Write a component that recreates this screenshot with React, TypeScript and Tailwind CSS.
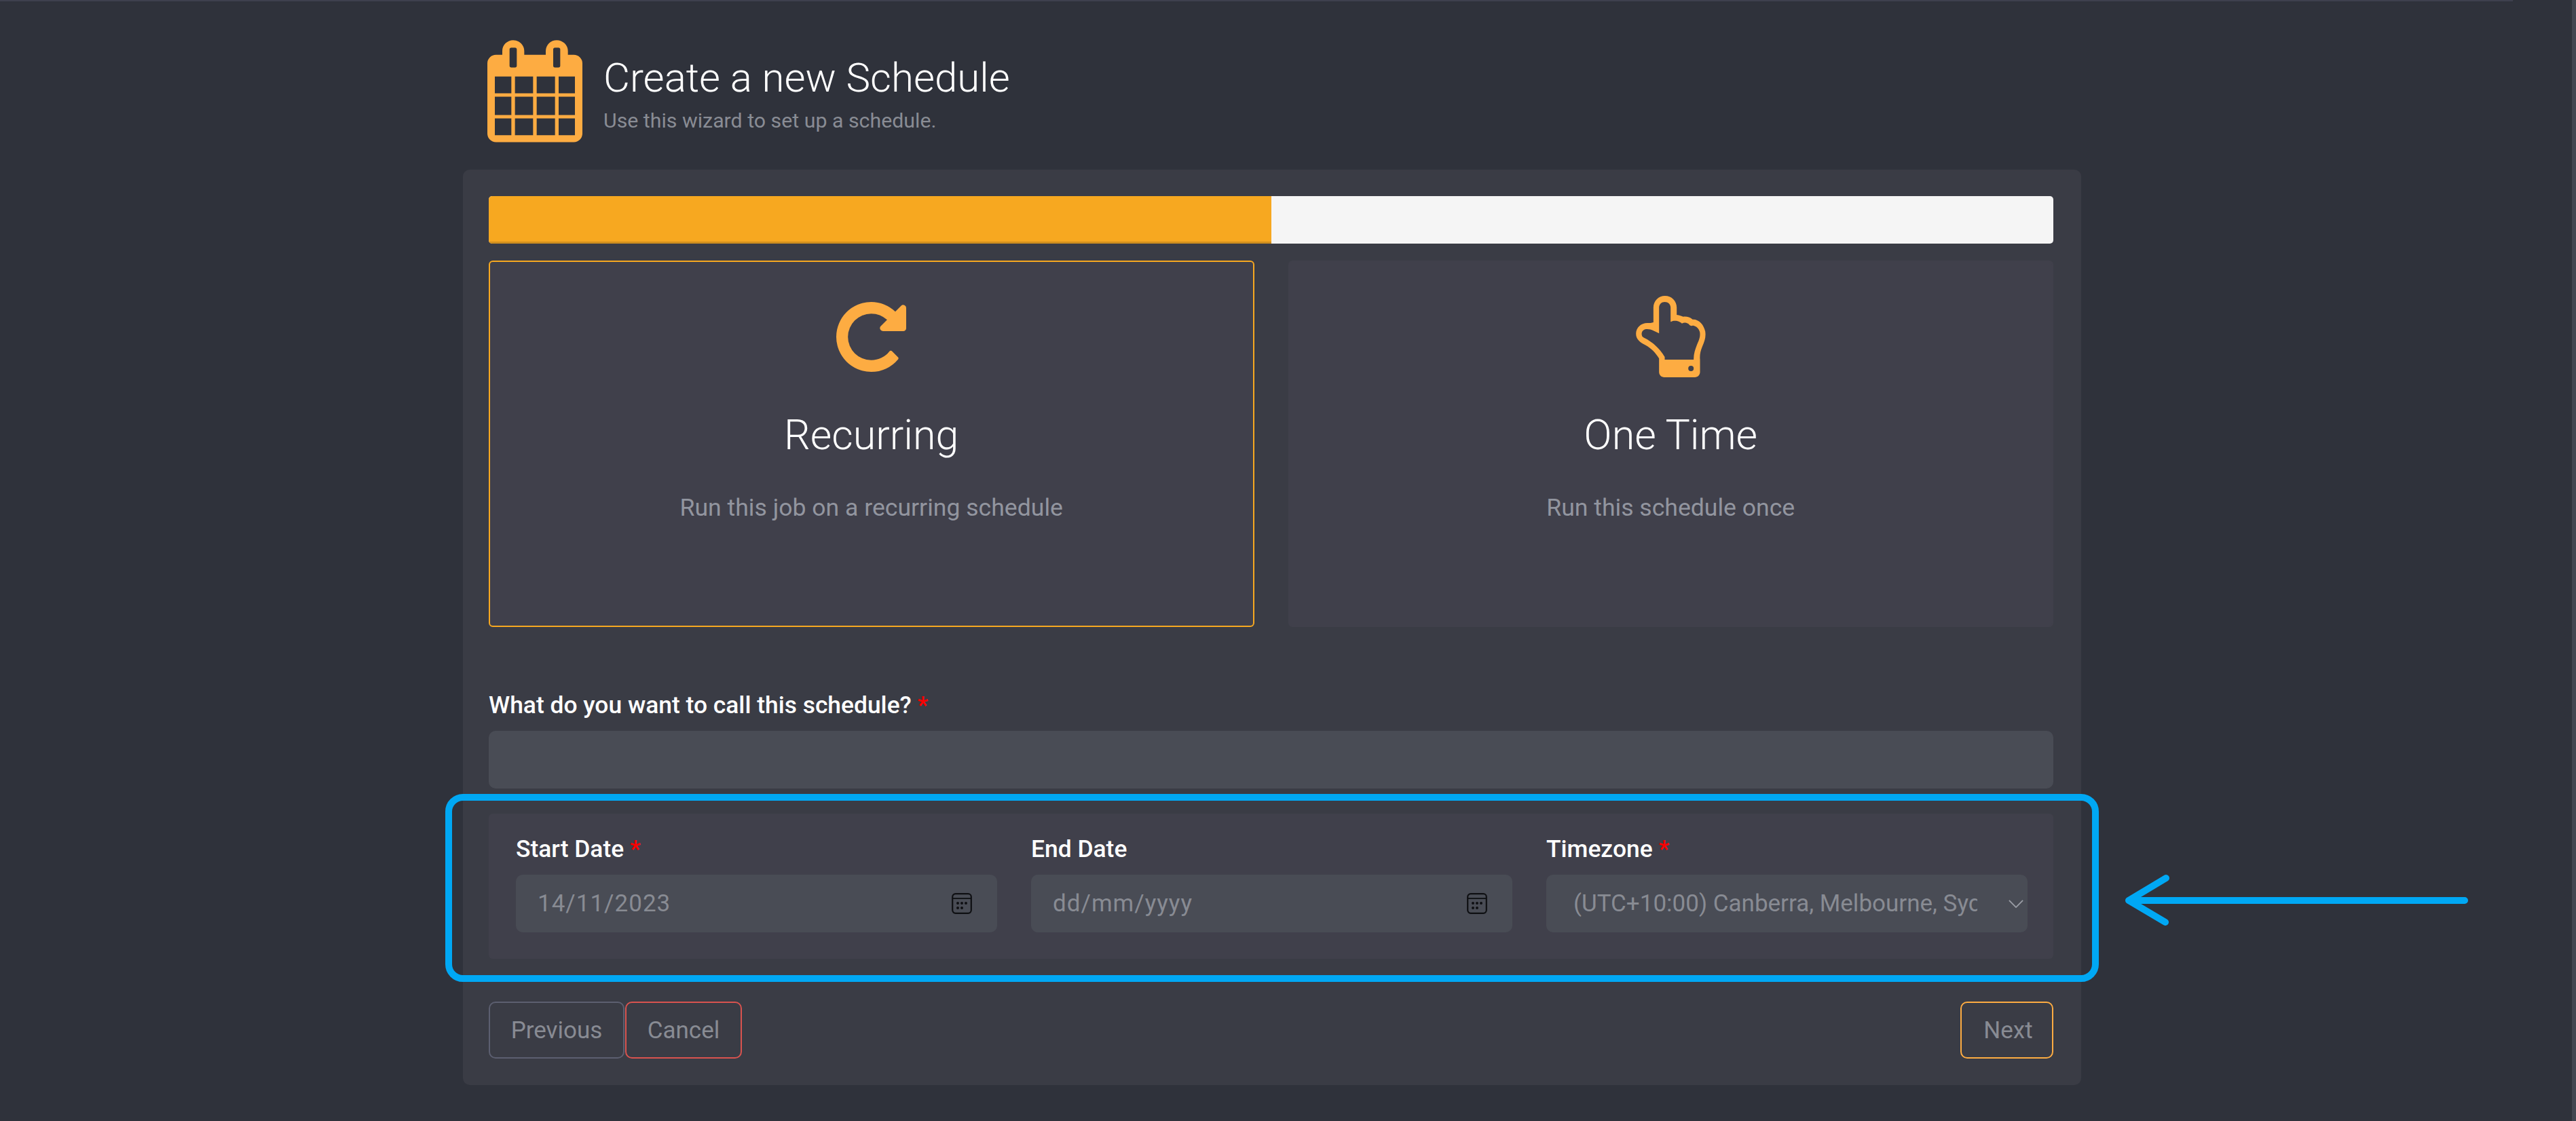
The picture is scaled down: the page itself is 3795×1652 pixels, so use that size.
const HAND =
  "M172 165V100C172 70 195 48 223 48C252 48 275 70 275 100V132C288 134 296 138 304 140C318 138 334 142 345 152C372 150 395 175 401 205C405 230 398 250 388 272C380 292 376 308 378 330V385C378 398 368 408 355 408H220C207 408 197 398 197 385V325C180 298 165 282 135 265C112 252 95 240 95 215C95 188 118 168 145 168C155 168 165 168 172 165Z" +
  "M222 330H350C349 305 358 280 367 258C376 238 380 225 377 208C373 192 362 182 347 179C340 182 334 180 331 176C324 168 312 163 298 170C290 162 268 152 248 163V100C248 85 237 75 222 75C208 75 197 85 197 100V214C180 205 160 193 140 195C125 197 116 210 122 226C124 230 128 232 132 234C165 250 200 280 222 318Z" +
  "M350 369a12 12 0 1 0-24 0a12 12 0 1 0 24 0Z"

const REDO =
  "M1664 256v448q0 26-19 45t-45 19h-448q-42 0-59-40-17-39 14-69l138-138q-148-137-349-137-104 0-198.5 40.5t-163.5 109.5-109.5 163.5-40.5 198.5 40.5 198.5 109.5 163.5 163.5 109.5 198.5 40.5q119 0 225-52t179-147q7-10 23-12 15 0 25 9l137 138q9 8 9.5 20.5t-7.5 22.5q-109 132-264 204.5t-327 72.5q-156 0-298-61t-245-164-164-245-61-298 61-298 164-245 245-164 298-61q147 0 284.5 55.5t244.5 156.5l130-129q29-31 70-14 39 17 39 59z"

const GRID_COLS = [[87, 160], [176, 256], [272, 353], [369, 441]]
const GRID_ROWS = [[218, 292], [307, 388], [403, 477]]

function CalendarLogo() {
  const cells = GRID_ROWS.flatMap(([t, b]) =>
    GRID_COLS.map(([l, r]) => `M${l} ${t}H${r}V${b}H${l}Z`)
  ).join("")
  return (
    <svg viewBox="54 57 420 452" className="w-[140px] h-[151px] shrink-0" fill="#fdac42">
      <path
        fillRule="evenodd"
        d={`M120 122V105a48 48 0 0 1 48-48a49 49 0 0 1 49 48V122H312V105a48 48 0 0 1 49-48a49 49 0 0 1 49 48V122H436a38 38 0 0 1 38 38V470a38 38 0 0 1-38 38H92a38 38 0 0 1-38-38V160a38 38 0 0 1 38-38ZM160 90a8 8 0 0 0-8 8V170a8 8 0 0 0 8 8H176a8 8 0 0 0 8-8V98a8 8 0 0 0-8-8ZM353 90a8 8 0 0 0-8 8V170a8 8 0 0 0 8 8H368a8 8 0 0 0 8-8V98a8 8 0 0 0-8-8Z${cells}`}
      />
    </svg>
  )
}

function DateIcon() {
  return (
    <svg viewBox="0 0 30 31" className="w-[30px] h-[31px]" fill="none" stroke="#0f1013" strokeWidth="2.2">
      <rect x="1.2" y="1.2" width="27.6" height="28.6" rx="4.5" />
      <path d="M1.2 8h27.6" strokeWidth="1.8" />
      <g fill="#0f1013" stroke="none">
        <circle cx="9" cy="15" r="2" />
        <circle cx="15" cy="15" r="2" />
        <circle cx="21" cy="15" r="2" />
        <circle cx="9" cy="22" r="2" />
        <circle cx="15" cy="22" r="2" />
      </g>
    </svg>
  )
}

function Choice({ title, desc, active, children }: { title: string; desc: string; active?: boolean; children: React.ReactNode }) {
  return (
    <div
      className={
        "h-[540px] rounded-[6px] bg-[#40404b] flex flex-col items-center pt-[50px] border-[2px] " +
        (active ? "border-[#f7a820]" : "border-[#40404b]")
      }
    >
      <div className="h-[120px] flex items-center justify-center">{children}</div>
      <div className="mt-[49px] text-[61px] leading-[72px] font-light text-white">{title}</div>
      <div className="mt-[49px] text-[35.6px] leading-[44px] text-[#92959f]">{desc}</div>
    </div>
  )
}

function DateField({ label, value, required }: { label: string; value: string; required?: boolean }) {
  return (
    <div>
      <FieldLabel label={label} required={required} />
      <div className="h-[85px] rounded-[10px] bg-[#494c55] flex items-center justify-between pl-[32px] pr-[37px]">
        <span className="pt-[2px] text-[35px] text-[#888b93] tracking-[1px]">{value}</span>
        <DateIcon />
      </div>
    </div>
  )
}

function FieldLabel({ label, required }: { label: string; required?: boolean }) {
  return (
    <div className="h-[50px] mb-[12px] flex items-center text-[35.4px] font-medium text-white">
      {label}
      {required && <span className="ml-[9px] text-[#ff0000]">*</span>}
    </div>
  )
}

function OutlineButton({ label, className }: { label: string; className: string }) {
  return (
    <div className={"h-[84px] rounded-[10px] border-[2px] flex items-center justify-center pt-[2px] text-[35px] text-[#888b93] " + className}>
      {label}
    </div>
  )
}

export default function App() {
  return (
    <div className="relative h-[1652px] overflow-hidden bg-[#2f323b] font-[family-name:Roboto,sans-serif]">
      <div className="h-[2px] w-[3702px] bg-[#3e404e]" />
      <div className="absolute right-0 top-0 bottom-0 w-[6px] bg-[#434651]" />

      {/* Page header */}
      <div className="ml-[718px] mt-[57px] flex items-center gap-[31px]">
        <CalendarLogo />
        <div className="mt-[7px]">
          <div className="text-[60px] leading-[72px] font-light text-white">Create a new Schedule</div>
          <div className="mt-[7px] text-[30.3px] leading-[40px] text-[#898c94]">Use this wizard to set up a schedule.</div>
        </div>
      </div>

      {/* Wizard card */}
      <div className="ml-[682px] mt-[40px] w-[2384px] h-[1349px] rounded-[10px] bg-[#3a3c45] pt-[39px] pl-[38px] pr-[41px]">
        <div className="h-[70px] rounded-[5px] bg-[#f5f5f5] overflow-hidden">
          <div className="h-full w-1/2 bg-[#f7a820] border-b-[3px] border-[#d18f1f]" />
        </div>

        <div className="mt-[25px] grid grid-cols-2 gap-[50px]">
          <Choice title="Recurring" desc="Run this job on a recurring schedule" active>
            <svg viewBox="128 128 1536 1536" className="w-[103px] h-[103px]" fill="#fdac42">
              <path d={REDO} />
            </svg>
          </Choice>
          <Choice title="One Time" desc="Run this schedule once">
            <svg viewBox="95 48 308 360" className="w-[103px] h-[120px]" fill="#fdac42">
              <path fillRule="evenodd" d={HAND} />
            </svg>
          </Choice>
        </div>

        <div className="mt-[91px]">
          <FieldLabel label="What do you want to call this schedule?" required />
          <div className="h-[85px] rounded-[10px] bg-[#494c55]" />
        </div>

        <div className="mt-[37px] h-[214px] rounded-[6px] bg-[#40404b] pl-[40px] pr-[38px] pt-[28px] grid grid-cols-3 gap-[50px]">
          <DateField label="Start Date" value="14/11/2023" required />
          <DateField label="End Date" value="dd/mm/yyyy" />
          <div>
            <FieldLabel label="Timezone" required />
            <div className="relative h-[85px] rounded-[10px] bg-[#494c55] flex items-center pl-[40px]">
              <span className="pt-[2px] w-[595px] overflow-hidden whitespace-nowrap text-[35px] text-[#888b93]">
                (UTC+10:00) Canberra, Melbourne, Sydney
              </span>
              <svg viewBox="0 0 24 13" className="absolute right-[6px] top-[37px] w-[22px] h-[12px]" fill="none" stroke="#9a9da5" strokeWidth="2">
                <path d="M1 1l11 11L23 1" />
              </svg>
            </div>
          </div>
        </div>

        <div className="mt-[63px] flex">
          <OutlineButton label="Previous" className="w-[200px] border-[#5c5f70]" />
          <OutlineButton label="Cancel" className="ml-[1px] w-[172px] border-[#d9534f]" />
          <OutlineButton label="Next" className="ml-auto w-[137px] pl-[4px] border-[#fdac42]" />
        </div>
      </div>

      {/* Annotation drawn over the shot */}
      <div className="absolute left-[656px] top-[1170px] w-[2436px] h-[277px] rounded-[26px] border-[10px] border-[#00a8f4]" />
      <svg className="absolute left-[3120px] top-[1280px] w-[530px] h-[94px]" viewBox="3120 1280 530 94" fill="none" stroke="#00a8f4" strokeWidth="10" strokeLinecap="round" strokeLinejoin="round">
        <path d="M3631 1327H3136M3191 1294L3136 1327L3190 1359" />
      </svg>
    </div>
  )
}
